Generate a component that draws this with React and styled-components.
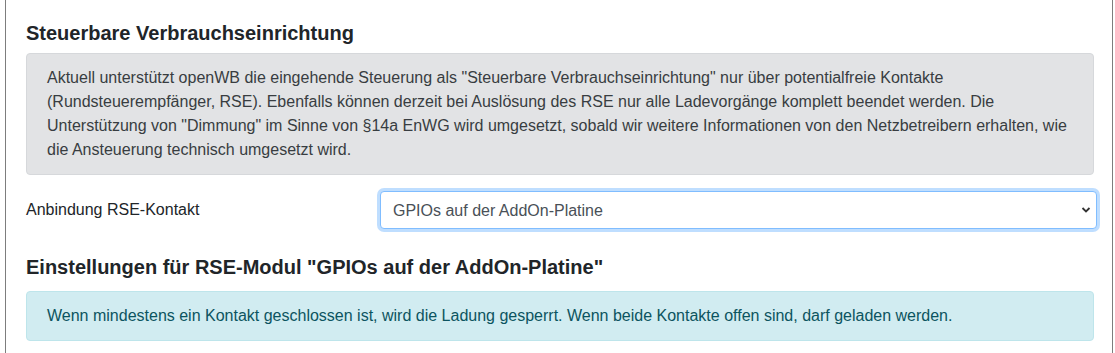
import React from 'react';
import styled, { createGlobalStyle } from 'styled-components';

const GlobalStyle = createGlobalStyle`
  body {
    margin: 0;
    background: #ffffff;
    font-family: "Liberation Sans", Arial, sans-serif;
    color: #212529;
  }
`;

const Page = styled.div`
  width: 1115px;
  height: 353px;
  overflow: hidden;
  padding: 0 2px 0 5px;
  box-sizing: border-box;
`;

const Card = styled.div`
  border-left: 1px solid #7d7d7d;
  border-right: 1px solid #7d7d7d;
  padding: 21px 18px 20px 20px;
  min-height: 353px;
  box-sizing: border-box;
`;

const Heading = styled.h5`
  margin: 0 0 ${(p) => p.mb || 8}px;
  font-size: 20px;
  font-weight: 700;
  line-height: 24px;
  color: #212529;
`;

const Alert = styled.div`
  border-radius: 4px;
  padding: 12px 20px;
  font-size: 16px;
  line-height: 24px;
  margin-bottom: ${(p) => p.mb || 16}px;
  background: ${(p) => (p.variant === 'info' ? '#d1ecf1' : '#e2e3e5')};
  border: 1px solid ${(p) => (p.variant === 'info' ? '#bee5eb' : '#d6d8db')};
  color: ${(p) => (p.variant === 'info' ? '#0c5460' : '#383d41')};
`;

const FormRow = styled.div`
  display: grid;
  grid-template-columns: 354px 1fr;
  align-items: center;
  margin-bottom: 26px;
`;

const Label = styled.label`
  font-size: 16px;
  line-height: 24px;
`;

const SelectWrap = styled.div`
  position: relative;
  margin-right: -3px;
`;

const Select = styled.select`
  width: 100%;
  height: 38px;
  box-sizing: border-box;
  appearance: none;
  padding: 6px 32px 6px 12px;
  font-family: "Liberation Sans", Arial, sans-serif;
  font-size: 16px;
  color: #495057;
  background: #fff;
  border: 1px solid #80bdff;
  border-radius: 4px;
  box-shadow: 0 0 0 3px rgba(0, 123, 255, 0.25);
  outline: none;
`;

const Chevron = styled.svg`
  position: absolute;
  right: 6px;
  top: 15px;
  pointer-events: none;
`;

export default function App() {
  return (
    <>
      <GlobalStyle />
      <Page>
        <Card>
          <Heading>Steuerbare Verbrauchseinrichtung</Heading>
          <Alert>
            Aktuell unterstützt openWB die eingehende Steuerung als "Steuerbare Verbrauchseinrichtung" nur über potentialfreie Kontakte
            (Rundsteuerempfänger, RSE). Ebenfalls können derzeit bei Auslösung des RSE nur alle Ladevorgänge komplett beendet werden. Die
            Unterstützung von "Dimmung" im Sinne von §14a EnWG wird umgesetzt, sobald wir weitere Informationen von den Netzbetreibern erhalten, wie
            die Ansteuerung technisch umgesetzt wird.
          </Alert>
          <FormRow>
            <Label>Anbindung RSE-Kontakt</Label>
            <SelectWrap>
              <Select defaultValue="gpio">
                <option value="gpio">GPIOs auf der AddOn-Platine</option>
              </Select>
              <Chevron width="10" height="8" viewBox="0 0 10 8">
                <path d="M1.5 2 L5 5.5 L8.5 2" fill="none" stroke="#333" strokeWidth="1.8" />
              </Chevron>
            </SelectWrap>
          </FormRow>
          <Heading mb={12}>Einstellungen für RSE-Modul "GPIOs auf der AddOn-Platine"</Heading>
          <Alert variant="info">
            Wenn mindestens ein Kontakt geschlossen ist, wird die Ladung gesperrt. Wenn beide Kontakte offen sind, darf geladen werden.
          </Alert>
        </Card>
      </Page>
    </>
  );
}
